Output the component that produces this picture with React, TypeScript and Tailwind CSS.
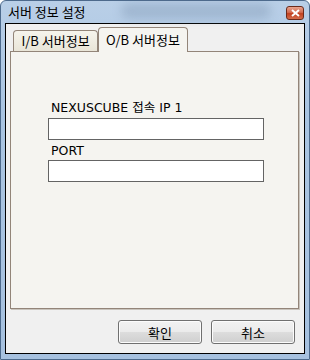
import React from "react";

function Btn({ label }: { label: string }) {
  return (
    <button className="w-[84px] h-[24px] rounded-[3px] border border-[#707070] text-[13px] leading-none text-black flex items-center justify-center font-['Noto_Sans_CJK_KR',sans-serif] bg-[linear-gradient(to_bottom,#f2f2f2_0%,#ebebeb_50%,#dddddd_50%,#cfcfcf_100%)] shadow-[inset_0_0_0_1px_#fcfcfc]">
      {label}
    </button>
  );
}

export default function App() {
  return (
    <div className="w-[310px] h-[360px] border border-[#4d6a8c] rounded-t-[6px] flex flex-col overflow-hidden relative bg-[linear-gradient(to_bottom,#b9cfe7_0%,#a9c4e2_30%,#a6c1df_100%)]">
      <div className="absolute left-[120px] top-[2px] w-[150px] h-[16px] bg-[#7f97b3] opacity-40 blur-[5px] rounded-full" />
      {/* title bar */}
      <div className="h-[22px] flex items-start justify-between pl-[7px] pr-[5px] relative">
        <span className="text-[13px] leading-[13px] mt-[4px] text-black font-['Noto_Sans_CJK_KR',sans-serif]">
          서버 정보 설정
        </span>
        <div className="mt-[5px] w-[18px] h-[14px] rounded-[3px] border border-[#6b2a1b] flex items-center justify-center bg-[linear-gradient(to_bottom,#e9a48f_0%,#d26a4f_45%,#c2401f_55%,#d46d4b_100%)]">
          <svg width="9" height="8" viewBox="0 0 9 8">
            <path d="M1 1 L8 7 M8 1 L1 7" stroke="#ffffff" strokeWidth="2" />
          </svg>
        </div>
      </div>
      {/* client */}
      <div className="mx-[4px] mb-[5px] flex-1 border border-black bg-[#f0f0f0] flex flex-col">
        <div className="flex-1 flex flex-col pl-[4px] pr-[5px] pt-[2px]">
          {/* tabs */}
          <div className="flex items-end h-[25px] pl-[3px] relative z-10 font-['Noto_Sans_CJK_KR',sans-serif] text-[13px] text-black">
            <div className="w-[85px] h-[21px] border border-[#938579] border-b-0 rounded-t-[4px] flex items-center justify-center bg-[linear-gradient(to_bottom,#f6f4ec_0%,#e9e5d8_100%)]">
              I/B 서버정보
            </div>
            <div className="w-[90px] h-[25px] -mb-[1px] border border-[#938579] border-b-0 rounded-t-[4px] flex items-center justify-center bg-[#f5f4f0]">
              O/B 서버정보
            </div>
          </div>
          {/* panel */}
          <div className="h-[258px] border border-[#938579] bg-[#f5f4f0] shadow-[1px_1px_0_#c9c4bd] pl-[37px] pt-[48px] text-black">
            <div className="pl-[3px] text-[12.5px] leading-[14px] font-['DejaVu_Sans',sans-serif]">
              NEXUSCUBE <span className="font-['Noto_Sans_CJK_KR',sans-serif]">접속</span> IP 1
            </div>
            <div className="mt-[3px] w-[216px] h-[22px] bg-white border border-[#646464]" />
            <div className="mt-[4px] pl-[3px] text-[12.5px] leading-[14px] font-['DejaVu_Sans',sans-serif]">
              PORT
            </div>
            <div className="mt-[2px] w-[216px] h-[22px] bg-white border border-[#646464]" />
          </div>
          {/* buttons */}
          <div className="flex justify-end gap-[9px] pt-[11px] pr-[4px]">
            <Btn label="확인" />
            <Btn label="취소" />
          </div>
        </div>
      </div>
    </div>
  );
}
